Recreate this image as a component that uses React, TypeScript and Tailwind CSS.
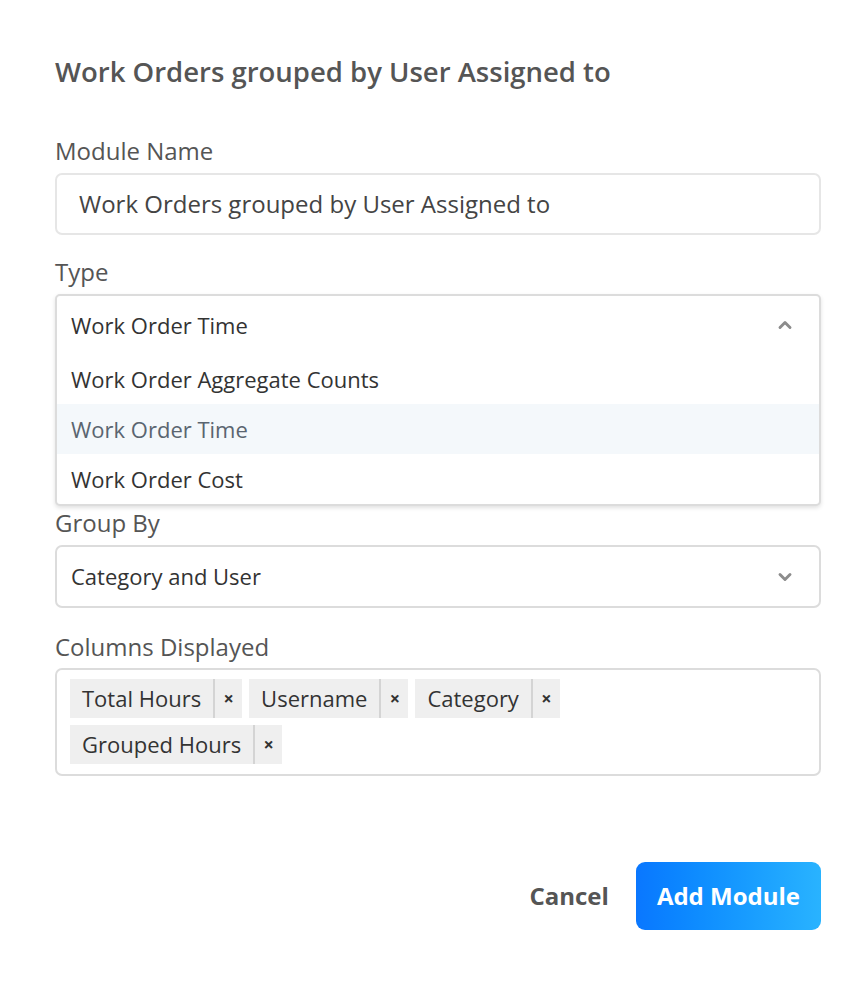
import { ChevronDown, ChevronUp } from "lucide-react";

const font = { fontFamily: '"Open Sans", "Liberation Sans", sans-serif' };

const typeOptions = ["Work Order Aggregate Counts", "Work Order Time", "Work Order Cost"];
const columnRows = [["Total Hours", "Username", "Category"], ["Grouped Hours"]];

function Tag({ label }: { label: string }) {
  return (
    <div className="flex h-[39px] items-stretch bg-[#efefef]">
      <span className="flex items-center px-3 text-[22px] text-[#333]">{label}</span>
      <span className="flex w-[29px] items-center justify-center border-l-2 border-[#d4d4d4] text-[18px] font-bold text-[#333]">
        ×
      </span>
    </div>
  );
}

export default function App() {
  return (
    <div className="min-h-screen bg-white pl-[55px] pr-[45px] pt-[51px]" style={font}>
      <h1 className="text-[27.5px] font-semibold leading-[42px] text-[#555]">Work Orders grouped by User Assigned to</h1>

      {/* Module name */}
      <label className="mt-[42px] block text-[24px] leading-[32px] text-[#555]">Module Name</label>
      <div className="mt-[6px] flex h-[62px] items-center rounded-[7px] border-2 border-[#e6e6e6] px-[22px] text-[24px] text-[#444]">
        Work Orders grouped by User Assigned to
      </div>

      {/* Type */}
      <label className="mt-[21px] block text-[24px] leading-[32px] text-[#555]">Type</label>
      <div className="relative mt-[6px] h-[62px]">
        <div className="absolute inset-x-0 top-0 z-10 rounded-[5px] border-2 border-[#dcdcdc] bg-white shadow-[0_2px_4px_rgba(0,0,0,0.12)]">
          <div className="flex h-[58px] items-center justify-between pl-[14px] pr-[24px] text-[22px] text-[#333]">
            <span>Work Order Time</span>
            <ChevronUp size={20} strokeWidth={3.5} className="text-[#8c8c8c]" />
          </div>
          {typeOptions.map((o) => (
            <div
              key={o}
              className={
                o === "Work Order Time"
                  ? "flex h-[50px] items-center bg-[#f4f8fb] pl-[14px] text-[22px] text-[#5a6570]"
                  : "flex h-[50px] items-center pl-[14px] text-[22px] text-[#333]"
              }
            >
              {o}
            </div>
          ))}
        </div>
      </div>

      {/* Group By */}
      <label className="mt-[151px] block text-[24px] leading-[32px] text-[#555]">Group By</label>
      <div className="mt-[6px] flex h-[63px] items-center justify-between rounded-[7px] border-2 border-[#dcdcdc] pl-[14px] pr-[24px] text-[22px] text-[#333]">
        <span>Category and User</span>
        <ChevronDown size={20} strokeWidth={3.5} className="text-[#8c8c8c]" />
      </div>

      {/* Columns */}
      <label className="mt-[23px] block text-[24px] leading-[32px] text-[#555]">Columns Displayed</label>
      <div className="mt-[5px] flex h-[108px] flex-col gap-[7px] rounded-[7px] border-2 border-[#dcdcdc] px-[13px] pt-[9px]">
        {columnRows.map((row, i) => (
          <div key={i} className="flex gap-[7px]">
            {row.map((c) => (
              <Tag key={c} label={c} />
            ))}
          </div>
        ))}
      </div>

      {/* Actions */}
      <div className="mt-[86px] flex items-center justify-end gap-[27px]">
        <button className="text-[24px] font-bold text-[#555]">Cancel</button>
        <button className="h-[68px] rounded-[9px] bg-gradient-to-r from-[#0a77ff] to-[#29b3ff] px-[21px] text-[24px] font-bold text-white">
          Add Module
        </button>
      </div>
    </div>
  );
}
